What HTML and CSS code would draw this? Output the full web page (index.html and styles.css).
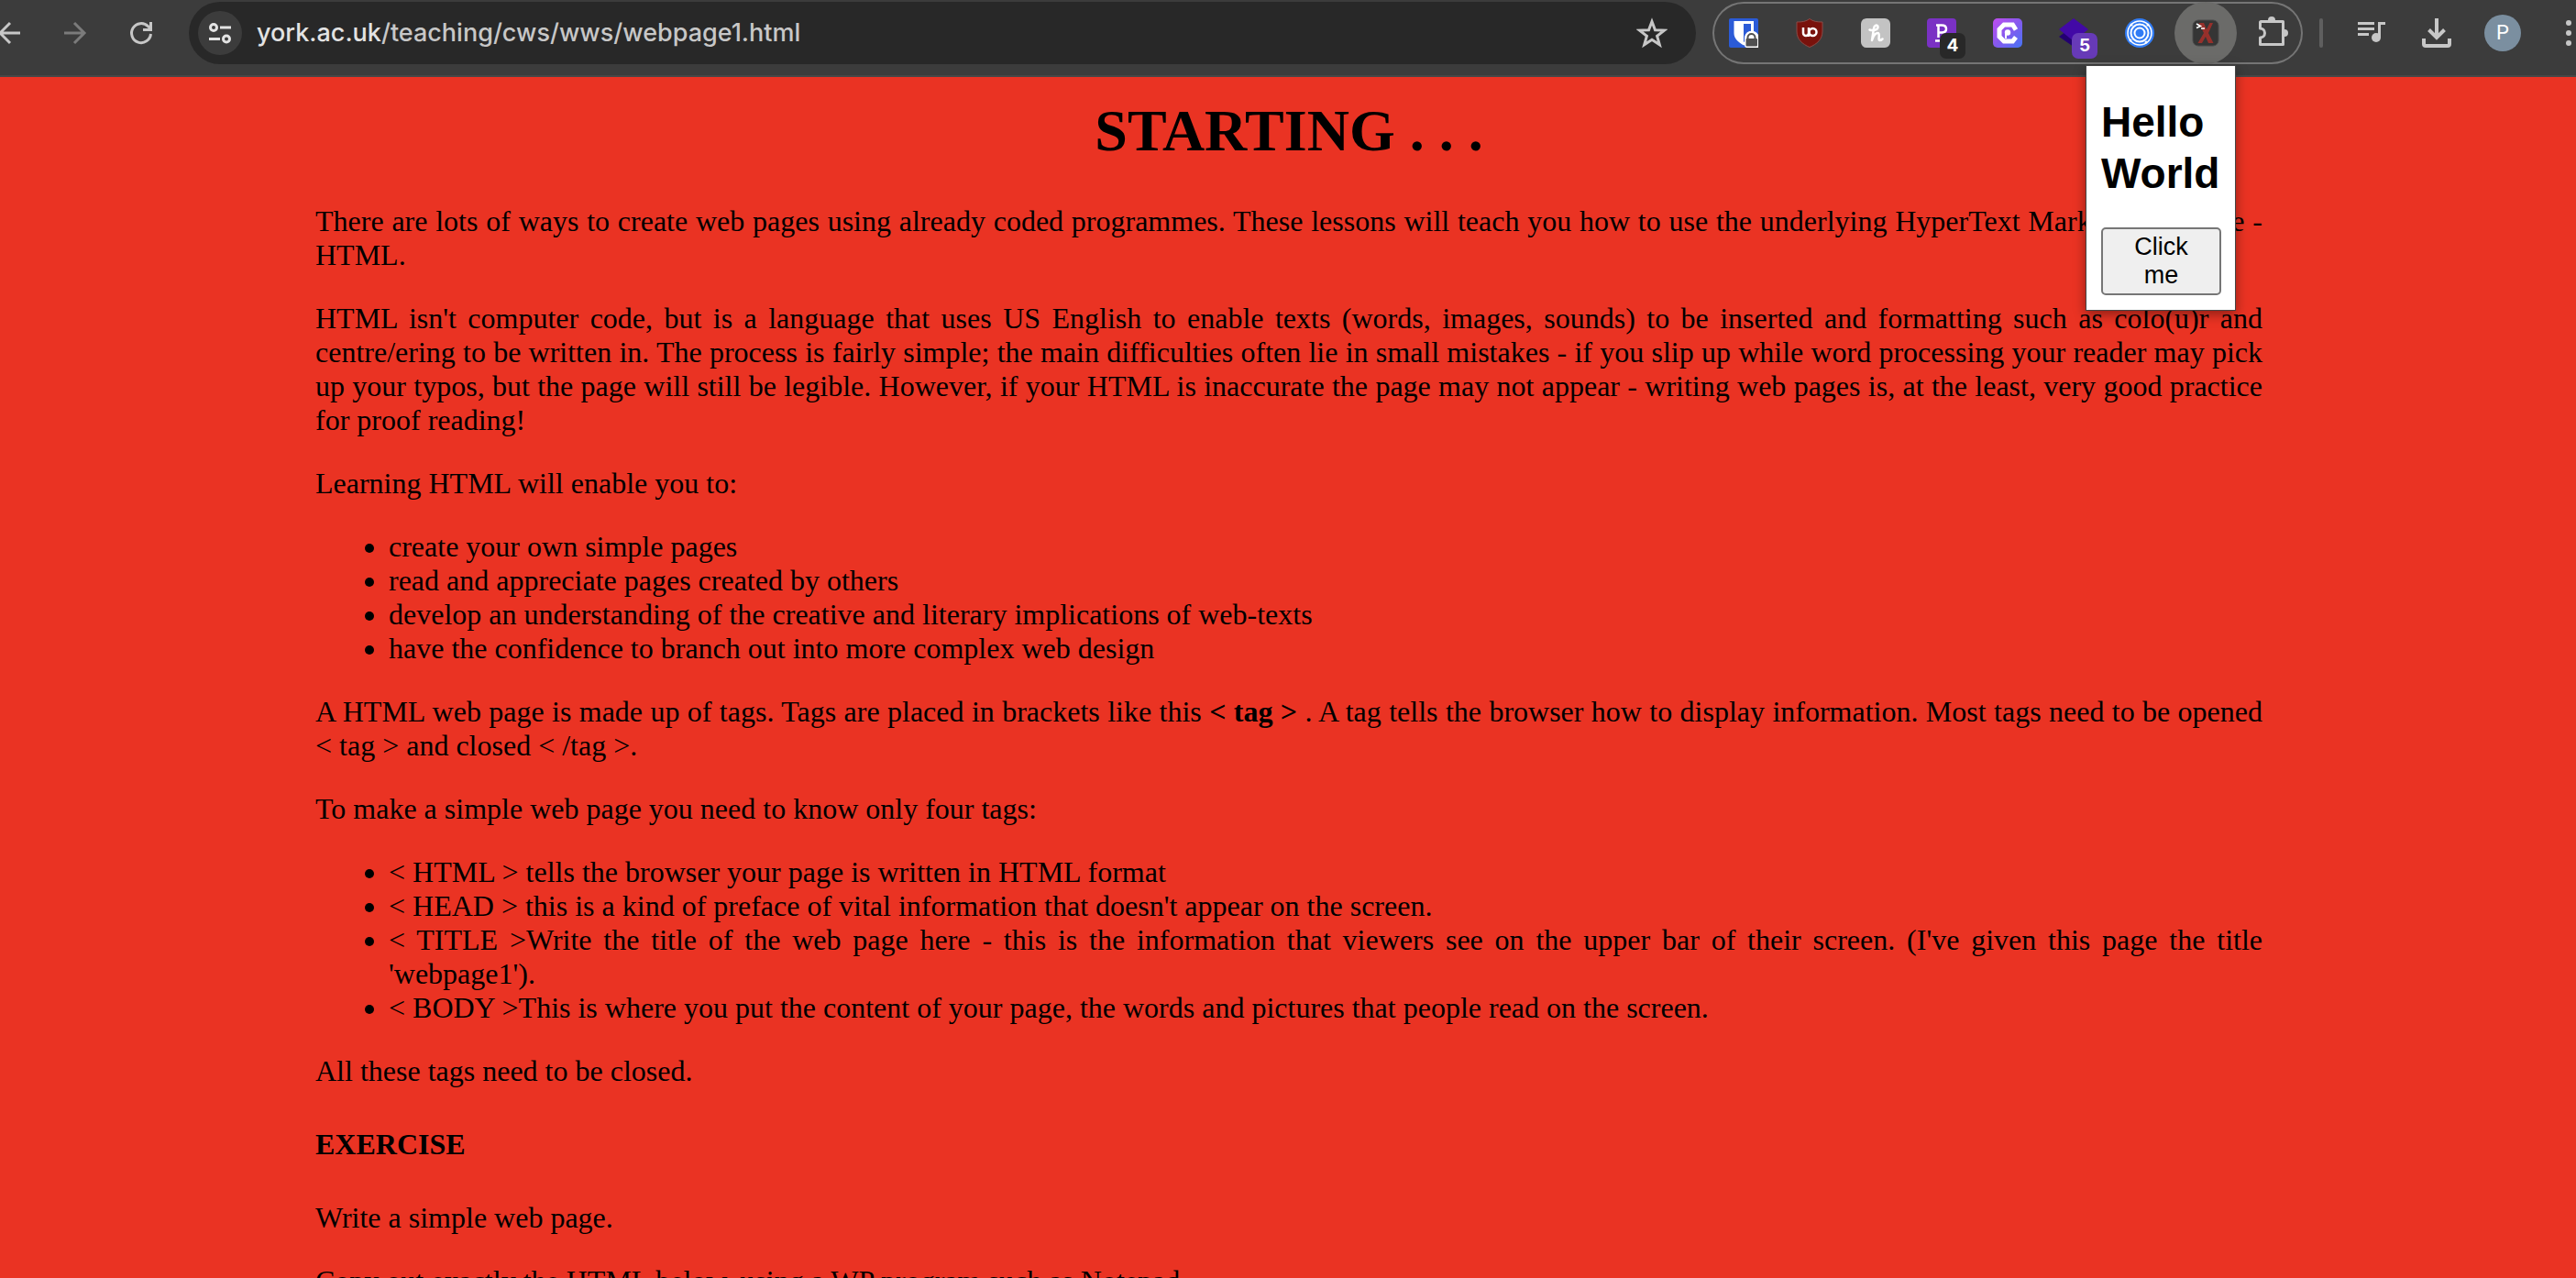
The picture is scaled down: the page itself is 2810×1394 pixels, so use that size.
FILE: index.html
```html
<!DOCTYPE html>
<html lang="en">
<head>
<meta charset="utf-8">
<title>webpage1</title>
<link rel="stylesheet" href="styles.css">
</head>
<body>
<header class="toolbar">
  <button class="slot" aria-label="Back"><svg width="32" height="32" viewBox="0 0 32 32"><path d="M28 16H6M17 5L6 16l11 11" fill="none" stroke="#c7c7c7" stroke-width="3"/></svg></button>
  <button class="slot" aria-label="Forward"><svg width="32" height="32" viewBox="0 0 32 32"><path d="M4 16h22M15 5l11 11-11 11" fill="none" stroke="#7b7b7b" stroke-width="3"/></svg></button>
  <button class="slot" aria-label="Reload"><svg width="32" height="32" viewBox="0 0 32 32"><path d="M26.500 17A10.500 10.500 0 1 1 23.500 8.700L26 11" fill="none" stroke="#c7c7c7" stroke-width="3"/><path d="M28 4v10H18v-3h7V4z" fill="#c7c7c7"/></svg></button>
  <div class="omnibox">
    <button class="site-info" aria-label="Site information"><svg width="24" height="24" viewBox="0 0 24 24" fill="none" stroke="#e3e3e3" stroke-width="3"><circle cx="5" cy="6" r="3.500"/><path d="M12 6h12M0 18.500h12"/><circle cx="19" cy="18.500" r="3.500"/></svg></button>
    <div class="url"><span class="host">york.ac.uk</span>/teaching/cws/wws/webpage1.html</div>
    <button class="slot" aria-label="Bookmark this page"><svg width="34" height="34" viewBox="0 0 34 34"><path d="M17 4.500l3.500 9.200 9.900.400-7.800 6.100 2.700 9.500-8.300-5.500-8.300 5.500 2.700-9.500-7.800-6.100 9.900-.400z" fill="none" stroke="#c7c7c7" stroke-width="3"/></svg></button>
  </div>
  <div class="extensions">
    <button class="slot" aria-label="Bitwarden"><svg width="32" height="32" viewBox="0 0 32 32"><rect width="32" height="32" rx="2" fill="#2b5bd7"/><path d="M5.500 3H27v13c0 7-6 11-10.700 13.500C10 26 5.500 22 5.500 16z" fill="#fff"/><path d="M16 6h8v10c0 4-3 7-8 10z" fill="#2b5bd7"/><path d="M32 32H19a3 3 0 0 1-2-3v-6a8 8 0 0 1 15-5z" fill="#fff"/><rect x="18.500" y="22" width="12.500" height="8.500" rx="1" fill="#505050"/><path d="M20.500 23v-2a4 4 0 0 1 8 0v2" fill="none" stroke="#505050" stroke-width="2"/></svg></button>
    <button class="slot" aria-label="uBlock Origin"><svg width="32" height="32" viewBox="0 0 32 32"><path d="M16 .500c4 3 8 3.500 14 3.500v10c0 9-6 14-14 17.500C8 28 2 23 2 14V4c6 0 10-.500 14-3.500z" fill="#79120c" stroke="#8b4a46"/><g fill="none" stroke="#fff" stroke-width="2.500"><path d="M9 10v6a3 3 0 0 0 6 0v-6M15 15v5"/><circle cx="19.500" cy="15" r="4"/></g></svg></button>
    <button class="slot" aria-label="Honey"><svg width="32" height="32" viewBox="0 0 32 32"><rect width="32" height="32" rx="6" fill="#c3c3c3"/><path d="M9.500 12.500c4 1.500 9.500 0 9-3.500-.500-2.500-4-1.500-4.500 2L12 24c1-4.500 4-8.500 6.500-8 3 .500-.500 8 2 8 1.300 0 2-.500 3-1.500" fill="none" stroke="#fff" stroke-width="2.500" stroke-linecap="round" stroke-linejoin="round"/></svg></button>
    <button class="slot" aria-label="Extension P, 4 notices"><svg width="32" height="32" viewBox="0 0 32 32"><rect width="32" height="32" rx="4" fill="#7a31c4"/><path d="M10 7.500h6c4 0 5 2 5 4s-1 4-5 4h-3M12.500 8v13M9 24.500h8" fill="none" stroke="#fff" stroke-width="2.500"/></svg><span class="badge">4</span></button>
    <button class="slot" aria-label="Extension C"><svg width="32" height="32" viewBox="0 0 32 32"><defs><linearGradient id="mix" x1="0" y1="0" x2="1" y2="1"><stop offset="0" stop-color="#c04df0"/><stop offset=".5" stop-color="#8659ee"/><stop offset="1" stop-color="#4575f5"/></linearGradient></defs><rect width="32" height="32" rx="5" fill="url(#mix)"/><path d="M25 12.500L21.500 7H12l-5 5v8l5 5h9.500l3.500-4.500" fill="none" stroke="#fff" stroke-width="5"/><circle cx="16" cy="15.500" r="3.200" fill="#fff"/><path d="M14 16v6" stroke="#fff" stroke-width="2"/></svg></button>
    <button class="slot" aria-label="Extension, 5 notices"><svg width="32" height="32" viewBox="0 0 32 32"><path d="M16 8l16 12-16 11L0 20z" fill="#230070"/><path d="M16 0l16 12-16 13L0 12z" fill="#4209a6"/></svg><span class="badge badge-purple">5</span></button>
    <button class="slot" aria-label="Extension rings"><svg width="32" height="32" viewBox="0 0 32 32"><circle cx="16" cy="16" r="16" fill="#317cf5"/><g fill="none" stroke="#fff" stroke-width="2"><circle cx="16" cy="16" r="13" stroke-width="1.500"/><circle cx="16" cy="16" r="9.500"/><circle cx="16" cy="16" r="5.500"/></g><g fill="#fff"><circle cx="7" cy="7" r="1.500"/><circle cx="25" cy="7" r="1.500"/><circle cx="6" cy="24" r="1.500"/><circle cx="23" cy="26" r="1.500"/></g></svg></button>
    <div class="anchor">
      <button class="slot slot-active" aria-label="Extension X"><svg width="32" height="32" viewBox="0 0 32 32"><rect x="2" y="2" width="28" height="28" rx="6" fill="#353535" stroke="#4a4a4a"/><path d="M8.500 5h5.500l3 7 3.500-7H24l-5 11 5.500 11H19l-3-7-4 7H7.500L14 16z" fill="#96302b"/><path d="M6 6l4.500 2.500L6 10.500M11 11h4" fill="none" stroke="#fff" stroke-width="1.600"/></svg></button>
      <section class="popup">
        <h1 class="popup-title">Hello World</h1>
        <button class="popup-button">Click me</button>
      </section>
    </div>
    <button class="slot" aria-label="Extensions"><svg class="puzzle" width="34" height="34" viewBox="0 0 34 34"><path d="M5 4.500h24.500v25H4.500v-7.500c2.500 0 5-2 5-5s-2.500-5-5-5V5z" fill="none" stroke="#c7c7c7" stroke-width="3" stroke-linejoin="round"/><path d="M13 4V3a4 4 0 0 1 8 0v1zM30 13h1a4 4 0 0 1 0 8h-1z" fill="#c7c7c7"/></svg></button>
  </div>
  <span class="divider"></span>
  <div class="actions">
    <button class="slot" aria-label="Media control"><svg width="32" height="32" viewBox="0 0 32 32"><path d="M2 5.500h18M2 11.500h18M2 17.500h12" stroke="#c7c7c7" stroke-width="3"/><path d="M32 4v3h-5v14h-3V4z" fill="#c7c7c7"/><circle cx="22" cy="21" r="5" fill="#c7c7c7"/></svg></button>
    <button class="slot" aria-label="Downloads"><svg width="32" height="32" viewBox="0 0 32 32" fill="none" stroke="#c7c7c7" stroke-width="4"><path d="M16 0v21M7.500 12.500L16 21l8.500-8.500M2 22v6q0 2 2 2h24q2 0 2-2v-6"/></svg></button>
    <button class="slot" aria-label="Profile"><span class="avatar">P</span></button>
    <button class="slot" aria-label="Menu"><svg width="32" height="32" viewBox="0 0 32 32" fill="#c7c7c7"><circle cx="16" cy="5" r="3"/><circle cx="16" cy="16" r="3"/><circle cx="16" cy="27" r="3"/></svg></button>
  </div>
</header>
<main class="page">
  <h1>STARTING . . .</h1>
  <p>There are lots of ways to create web pages using already coded programmes. These lessons will teach you how to use the underlying HyperText Markup Language - HTML.</p>
  <p>HTML isn't computer code, but is a language that uses US English to enable texts (words, images, sounds) to be inserted and formatting such as colo(u)r and centre/ering to be written in. The process is fairly simple; the main difficulties often lie in small mistakes - if you slip up while word processing your reader may pick up your typos, but the page will still be legible. However, if your HTML is inaccurate the page may not appear - writing web pages is, at the least, very good practice for proof reading!</p>
  <p>Learning HTML will enable you to:</p>
  <ul>
    <li>create your own simple pages</li>
    <li>read and appreciate pages created by others</li>
    <li>develop an understanding of the creative and literary implications of web-texts</li>
    <li>have the confidence to branch out into more complex web design</li>
  </ul>
  <p>A HTML web page is made up of tags. Tags are placed in brackets like this <b>&lt; tag &gt;</b> . A tag tells the browser how to display information. Most tags need to be opened &lt; tag &gt; and closed &lt; /tag &gt;.</p>
  <p>To make a simple web page you need to know only four tags:</p>
  <ul>
    <li>&lt; HTML &gt; tells the browser your page is written in HTML format</li>
    <li>&lt; HEAD &gt; this is a kind of preface of vital information that doesn't appear on the screen.</li>
    <li>&lt; TITLE &gt;Write the title of the web page here - this is the information that viewers see on the upper bar of their screen. (I've given this page the title 'webpage1').</li>
    <li>&lt; BODY &gt;This is where you put the content of your page, the words and pictures that people read on the screen.</li>
  </ul>
  <p>All these tags need to be closed.</p>
  <h4>EXERCISE</h4>
  <p>Write a simple web page.</p>
  <p>Copy out exactly the HTML below, using a WP program such as Notepad.</p>
</main>
</body>
</html>
```

FILE: styles.css
```css
* {
  box-sizing: border-box;
}

body {
  margin: 0;
  height: 100vh;
  display: flex;
  flex-direction: column;
  overflow: hidden;
  background: #ea3323;
}

button {
  border: 0;
  padding: 0;
  background: none;
}

svg {
  display: block;
  flex: none;
}

.puzzle {
  overflow: visible;
}

/* Browser toolbar */
.toolbar {
  flex: none;
  display: flex;
  align-items: center;
  gap: 4px;
  height: 84px;
  margin: 0 -26px 0 -24px;
  padding-bottom: 10px;
  border-bottom: 2px solid #474747;
  background: #3c3c3c;
}

.slot {
  position: relative;
  flex: none;
  display: flex;
  align-items: center;
  justify-content: center;
  width: 68px;
  height: 68px;
  border-radius: 34px;
}

.slot-active {
  background: #6b6b69;
}

.omnibox {
  flex: 1;
  display: flex;
  align-items: center;
  height: 68px;
  margin: 0 14px;
  padding: 0 14px 0 10px;
  border-radius: 34px;
  background: #282828;
}

.site-info {
  display: flex;
  align-items: center;
  justify-content: center;
  width: 48px;
  height: 48px;
  border-radius: 24px;
  background: #3c3c3c;
}

.url {
  flex: 1;
  padding-left: 16px;
  font: 500 27px/34px Inter, sans-serif;
  color: #c7c7c7;
}

.host {
  color: #e3e3e3;
}

.extensions {
  display: flex;
  gap: 4px;
  border-radius: 34px;
  box-shadow: inset 0 0 0 2px #757575;
}

.badge {
  position: absolute;
  left: 32px;
  top: 34px;
  width: 28px;
  height: 28px;
  border-radius: 7px;
  background: #282828;
  color: #fff;
  font: bold 19px/28px Inter, sans-serif;
  text-align: center;
}

.badge-purple {
  background: #673ab7;
}

.divider {
  width: 4px;
  height: 32px;
  margin: 0 14px;
  border-radius: 2px;
  background: #5f5f5f;
}

.actions {
  display: flex;
  gap: 4px;
}

.avatar {
  width: 40px;
  height: 40px;
  border-radius: 20px;
  background: #7b8fa0;
  color: #fff;
  font: 22px/40px Roboto, sans-serif;
  text-align: center;
}

/* Extension popup */
.anchor {
  position: relative;
}

.popup {
  position: absolute;
  top: 69px;
  right: 1px;
  z-index: 1;
  width: 164px;
  padding: 33px 15px 16px 16px;
  border: 1px solid #454545;
  background: #fff;
  box-shadow: 0 4px 12px rgba(0, 0, 0, 0.4);
}

.popup-title {
  margin: 0 0 31px;
  font: bold 46px/56px "Liberation Sans", Arial, sans-serif;
}

.popup-button {
  display: block;
  width: 100%;
  padding: 4px 12px;
  border: 2px solid #767676;
  border-radius: 5px;
  background: #efefef;
  color: #000;
  font: 27px/31px "Liberation Sans", Arial, sans-serif;
}

/* Lesson page */
.page {
  flex: 1;
  min-height: 0;
  overflow: hidden;
  padding: 22px 342px 0 344px;
  color: #000;
  font: 32px/37px "Liberation Serif", "Times New Roman", serif;
  text-align: justify;
}

.page h1 {
  margin: 0 0 43px;
  font-size: 64px;
  line-height: 74px;
  text-align: center;
}

.page p,
.page ul {
  margin: 32px 0;
}

.page ul {
  padding-left: 80px;
}

.page h4 {
  margin: 43px 0;
  font-size: 32px;
}
```
